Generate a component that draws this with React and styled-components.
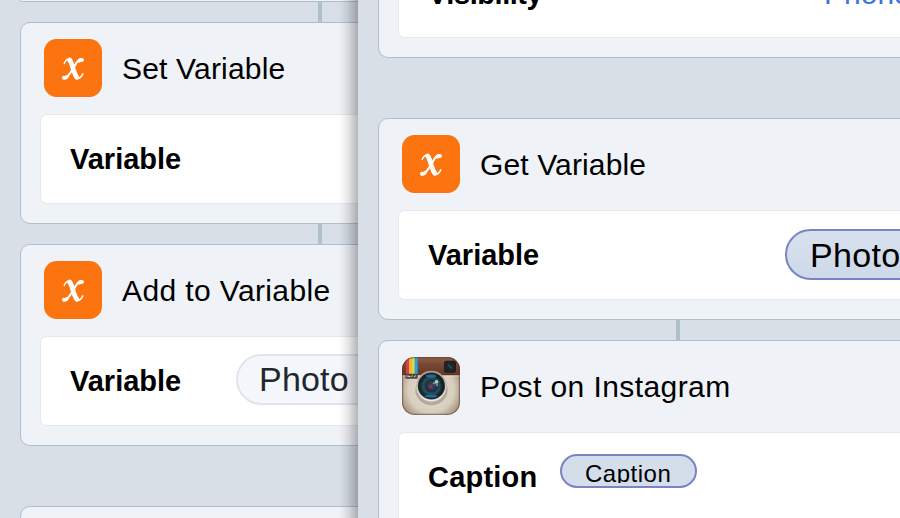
import React from "react";
import styled, { createGlobalStyle } from "styled-components";

const Global = createGlobalStyle`
  * { box-sizing: border-box; }
  html, body { margin: 0; padding: 0; overflow: hidden; }
  body { font-family: "Liberation Sans", Arial, Helvetica, sans-serif; color: #000; }
`;

const Screen = styled.main`
  display: grid;
  grid-template-columns: 358px 542px;
  width: 900px;
  height: 518px;
  overflow: hidden;
  background: #d8dfe7;
`;

const Pane = styled.section`
  display: flex;
  flex-direction: column;
  align-items: flex-start;
  height: 518px;
  padding-left: 20px;
  overflow: hidden;
  background: #d8dfe7;
`;

const LeftPane = styled(Pane)`
  display: grid;
  grid-template-columns: 600px;
  grid-auto-rows: max-content;
  position: relative;
  &::after {
    content: "";
    position: absolute;
    inset: 0 0 0 auto;
    width: 21px;
    background: linear-gradient(to right, rgba(30, 25, 30, 0), rgba(30, 25, 30, 0.02) 20%, rgba(30, 25, 30, 0.1) 50%, rgba(30, 25, 30, 0.21) 76%, rgba(30, 25, 30, 0.32));
  }
`;

const Card = styled.article`
  width: 600px;
  height: ${(p) => p.$height || 202}px;
  flex: none;
  padding: 0 19px;
  border: 1px solid #b0bfcc;
  border-radius: 10px;
  background: #eff2f7;
`;

const CardTail = styled(Card)`
  height: ${(p) => p.$height}px;
  border-top: 0;
  border-radius: 0 0 10px 10px;
`;

const Header = styled.header`
  display: flex;
  align-items: center;
  gap: 20px;
  height: 91px;
  padding: 0 0 1px 4px;
`;

const Title = styled.h2`
  margin: 2px 0 0;
  font-size: 30px;
  font-weight: 400;
  line-height: 36px;
  letter-spacing: ${(p) => p.$tracking || 0}px;
  white-space: nowrap;
`;

const Fields = styled.div`
  display: flex;
  align-items: ${(p) => p.$align || "center"};
  height: ${(p) => p.$height || 90}px;
  padding-left: 29px;
  border: 1px solid #e4e9ee;
  border-top-width: ${(p) => (p.$tail ? 0 : 1)}px;
  border-radius: ${(p) => (p.$tail ? "0 0 7px 7px" : "7px")};
  background: #fff;
`;

const Label = styled.span`
  flex: none;
  width: ${(p) => p.$width}px;
  font-size: 29px;
  font-weight: 700;
  line-height: 36px;
  letter-spacing: ${(p) => p.$tracking ?? 0}px;
  margin-top: ${(p) => p.$top || 0}px;
  white-space: nowrap;
`;

const Value = styled(Label)`
  font-weight: 400;
  font-size: 30px;
  color: #3d73dd;
`;

const Token = styled.span`
  flex: none;
  width: 300px;
  height: 51px;
  margin-bottom: ${(p) => (p.$active ? 2 : 4)}px;
  padding: 0 0 0 ${(p) => (p.$active ? 23 : 21)}px;
  border: 2px solid ${(p) => (p.$active ? "#7c83c3" : "#e1e3ee")};
  border-radius: 26px;
  background: ${(p) => (p.$active ? "linear-gradient(#d8e0ed, #cdd9e9)" : "#f4f7fb")};
  color: ${(p) => (p.$active ? "#000" : "#23282d")};
  font-size: 34px;
  line-height: ${(p) => (p.$active ? 48 : 46)}px;
  letter-spacing: ${(p) => (p.$active ? 0.35 : 0.2)}px;
`;

const SmallToken = styled.span`
  width: 137px;
  height: 34px;
  margin-top: 21px;
  padding: 0 23px;
  border: 2px solid #7c83c3;
  border-radius: 17px;
  background: #d4deeb;
`;

const ClippedText = styled.span`
  display: block;
  height: 27px;
  overflow: hidden;
  font-size: 24px;
  line-height: 35px;
  letter-spacing: 0.5px;
`;

const Connector = styled.div`
  flex: none;
  width: 4px;
  height: 20px;
  margin-left: 298px;
  background: #b0c0cb;
`;

const Gap = styled.div`
  flex: none;
  height: 60px;
`;

const Icon = styled.svg`
  display: block;
  flex: none;
  width: 58px;
  height: 58px;
`;

const VariableIcon = () => (
  <Icon viewBox="0 0 58 58">
    <rect width="58" height="58" rx="12.5" fill="#fb7410" />
    <g fill="none" stroke="#fff" strokeLinecap="round" strokeLinejoin="round">
      <path d="M20.2 24.4C21.3 21.6 23.2 19.9 25.2 20.2M34 39.4C36.3 39.1 37.8 37.2 38.8 34.9" strokeWidth="1.5" />
      <path d="M25.6 21C28.7 24.2 29.3 34.5 33 38.4" strokeWidth="4.7" />
      <path d="M38.6 20.3C34.3 19.2 32.1 24.4 29.5 28.7C26.7 33.5 24.1 38.9 19.6 39.5" strokeWidth="2" />
      <path d="M38.1 21.1Q36.7 20.5 35.4 21.8M19.8 38.7Q21.4 39.4 22.9 37.8" strokeWidth="3.6" />
    </g>
  </Icon>
);

const CameraIcon = () => (
  <Icon viewBox="0 0 58 58">
    <defs>
      <clipPath id="camera-shape"><rect width="58" height="58" rx="12.5" /></clipPath>
      <linearGradient id="leather" x2="0" y2="1">
        <stop stopColor="#8f5f48" /><stop offset=".4" stopColor="#784935" /><stop offset="1" stopColor="#633827" />
      </linearGradient>
      <radialGradient id="body" cx=".5" cy=".56" r=".68">
        <stop stopColor="#e8e0d1" /><stop offset=".58" stopColor="#d8cebd" /><stop offset=".8" stopColor="#ae9a85" /><stop offset="1" stopColor="#644735" />
      </radialGradient>
      <radialGradient id="glass" cx=".48" cy=".52" r=".52">
        <stop stopColor="#7b4b79" /><stop offset=".22" stopColor="#3b304e" /><stop offset=".48" stopColor="#234c57" /><stop offset=".75" stopColor="#17343d" /><stop offset="1" stopColor="#10151b" />
      </radialGradient>
      <linearGradient id="ring" x2="0" y2="1">
        <stop stopColor="#a99b91" /><stop offset=".5" stopColor="#c9c1b7" /><stop offset="1" stopColor="#efebe4" />
      </linearGradient>
    </defs>
    <g clipPath="url(#camera-shape)">
      <rect width="58" height="58" fill="url(#body)" />
      <rect width="58" height="18" fill="url(#leather)" />
      <path d="M0 18H58" stroke="#4f3023" strokeWidth=".8" />
      <path d="M0 18.9H58" stroke="#f2eadb" strokeWidth=".7" />
      <path d="M4 0H7V17H4Z" fill="#df3c45" />
      <path d="M7 0H10V17H7Z" fill="#f4b52b" />
      <path d="M10 0H12.8V17H10Z" fill="#d5dc51" />
      <path d="M12.8 0H15.7V17H12.8Z" fill="#2ba0e2" />
      <rect x="3.3" y="16.8" width="12.5" height="5" rx="1" fill="#51443e" />
      <path d="M5 20V18.4M6.7 20V18.9L8 20V18.9M9.5 19.9L10.5 18.5M11.9 20L13.9 18.6" stroke="#e5dfd8" strokeWidth=".9" fill="none" />
      <rect x="42" y="3.7" width="12" height="12" rx="2.5" fill="#241d1c" />
      <rect x="44" y="5.5" width="8" height="8.3" rx="2" fill="#172a31" />
      <path d="M46 7.5L50 11.5" fill="none" stroke="#31545a" strokeWidth="1.4" />
      <ellipse cx="29.5" cy="33" rx="16.2" ry="15.2" fill="#322018" opacity=".24" />
      <circle cx="29.4" cy="29.1" r="15.3" fill="url(#ring)" />
      <circle cx="29.4" cy="29" r="13.6" fill="#343230" />
      <circle cx="29.4" cy="29" r="12.7" fill="url(#glass)" />
      <circle cx="29.4" cy="29" r="8.6" fill="none" stroke="#2b6770" strokeWidth="1.6" opacity=".45" />
      <circle cx="29.4" cy="29" r="5.5" fill="none" stroke="#142331" strokeWidth="1.5" opacity=".7" />
      <ellipse cx="29" cy="19" rx="5.2" ry="1.7" fill="#2975b0" opacity=".8" />
      <ellipse cx="29" cy="39.2" rx="6.5" ry="1.4" fill="#2373b9" opacity=".85" />
      <circle cx="34.5" cy="24.8" r="1.9" fill="#c2dcd5" opacity=".9" />
      <circle cx="32" cy="26.2" r="1.2" fill="#7aa9a7" opacity=".8" />
      <circle cx="35" cy="28.2" r="1.1" fill="#83b6af" opacity=".8" />
      <rect x=".6" y=".6" width="56.8" height="56.8" rx="12" fill="none" stroke="#583427" strokeWidth="1.2" opacity=".5" />
    </g>
  </Icon>
);

export default function App() {
  return (
    <>
      <Global />
      <Screen>
        <LeftPane>
          <CardTail $height={2} />
          <Connector />
          <Card>
            <Header><VariableIcon /><Title $tracking={0.18}>Set Variable</Title></Header>
            <Fields><Label $width={166}>Variable</Label></Fields>
          </Card>
          <Connector />
          <Card>
            <Header><VariableIcon /><Title $tracking={0.38}>Add to Variable</Title></Header>
            <Fields>
              <Label $width={166}>Variable</Label>
              <Token>Photo</Token>
            </Fields>
          </Card>
          <Gap />
          <Card />
        </LeftPane>
        <Pane>
          <CardTail $height={58}>
            <Fields $tail $height={38} $align="flex-start">
              <Label $width={396} $top={-24} $tracking={-0.45}>Visibility</Label>
              <Value $width={130} $top={-24}>Phone</Value>
            </Fields>
          </CardTail>
          <Gap />
          <Card>
            <Header><VariableIcon /><Title $tracking={0.13}>Get Variable</Title></Header>
            <Fields>
              <Label $width={357}>Variable</Label>
              <Token $active>Photo</Token>
            </Fields>
          </Card>
          <Connector />
          <Card $height={300}>
            <Header><CameraIcon /><Title $tracking={0.42}>Post on Instagram</Title></Header>
            <Fields $height={188} $align="flex-start">
              <Label $width={132} $top={26} $tracking={0.2}>Caption</Label>
              <SmallToken><ClippedText>Caption</ClippedText></SmallToken>
            </Fields>
          </Card>
        </Pane>
      </Screen>
    </>
  );
}
